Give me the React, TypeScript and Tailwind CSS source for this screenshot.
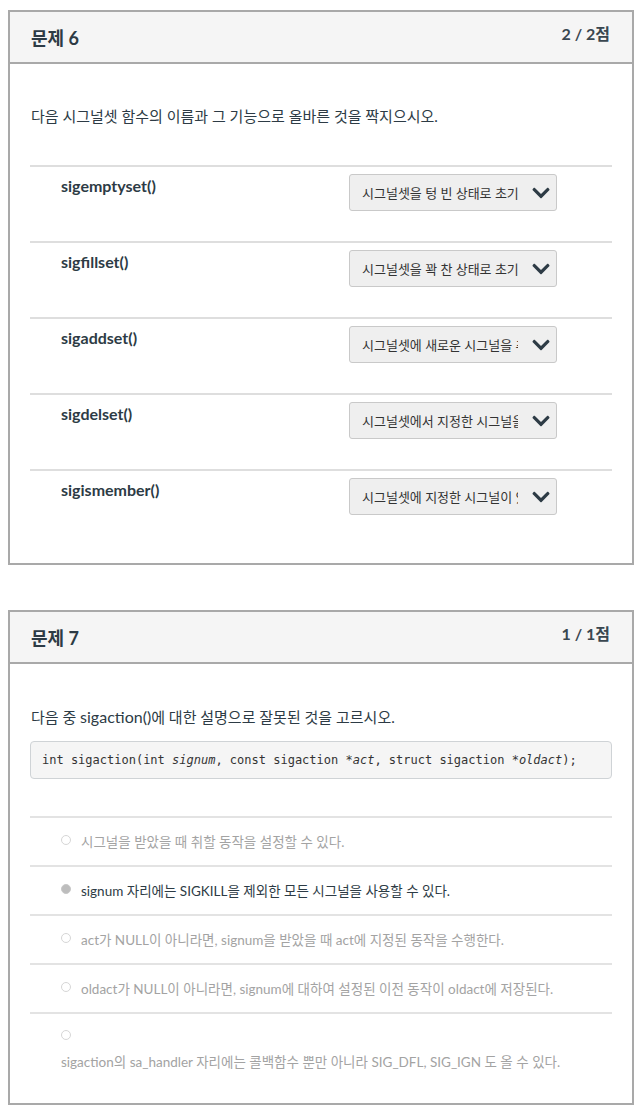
import { FaChevronDown } from "react-icons/fa"

const matches = [
  { name: "sigemptyset()", answer: "시그널셋을 텅 빈 상태로 초기화한다." },
  { name: "sigfillset()", answer: "시그널셋을 꽉 찬 상태로 초기화한다." },
  { name: "sigaddset()", answer: "시그널셋에 새로운 시그널을 추가한다." },
  { name: "sigdelset()", answer: "시그널셋에서 지정한 시그널을 삭제한다." },
  { name: "sigismember()", answer: "시그널셋에 지정한 시그널이 있는지 확인한다." },
]

const options = [
  { text: "시그널을 받았을 때 취할 동작을 설정할 수 있다.", selected: false },
  { text: "signum 자리에는 SIGKILL을 제외한 모든 시그널을 사용할 수 있다.", selected: true },
  { text: "act가 NULL이 아니라면, signum을 받았을 때 act에 지정된 동작을 수행한다.", selected: false },
  { text: "oldact가 NULL이 아니라면, signum에 대하여 설정된 이전 동작이 oldact에 저장된다.", selected: false },
]

function Header({ title, score }: { title: string; score: string }) {
  return (
    <div className="flex h-[52px] items-start justify-between border-b-2 border-[#a9a9a9] bg-[#f5f5f5] pl-[21px] pr-[22px]">
      <h2 className="mt-[13px] text-[18px] font-bold leading-[26px] text-[#2d3b45]">{title}</h2>
      <span className="mt-[10px] text-[16px] font-bold leading-[24px] text-[#3a4750]">{score}</span>
    </div>
  )
}

function Radio({ selected }: { selected: boolean }) {
  return selected ? (
    <span className="block h-[10px] w-[10px] shrink-0 rounded-full border border-[#c8c8c8] bg-[#bdbdbd]" />
  ) : (
    <span className="block h-[10px] w-[10px] shrink-0 rounded-full border border-[#d6d6d6] bg-white" />
  )
}

export default function App() {
  return (
    <div className="min-h-[1120px] bg-white px-[8px] pt-[10px] font-['Lato','Noto_Sans_CJK_KR',sans-serif] text-[#2d3b45]">
      {/* 문제 6 */}
      <section className="border-2 border-[#a9a9a9]">
        <Header title="문제 6" score="2 / 2점" />
        <div className="px-[20px] pb-[18px] pt-[40px]">
          <p className="pl-[1px] text-[15px] leading-[24px]">다음 시그널셋 함수의 이름과 그 기능으로 올바른 것을 짝지으시오.</p>
          <div className="mt-[37px]">
            {matches.map((m) => (
              <div key={m.name} className="flex border-t-2 border-[#dedede] pb-[30px] pt-[7px]">
                <div className="w-[319px] pl-[31px] text-[16px] font-bold leading-[24px]">{m.name}</div>
                <div className="flex h-[37px] w-[208px] items-center rounded-[3px] border border-[#c9c9c9] bg-[#efefef] pl-[12px] pr-[5px]">
                  <span className="w-[156px] overflow-hidden whitespace-nowrap pt-[2px] text-[13px] text-[#333]">{m.answer}</span>
                  <FaChevronDown size={20} className="ml-auto text-[#2d3b45]" />
                </div>
              </div>
            ))}
          </div>
        </div>
      </section>

      {/* 문제 7 */}
      <section className="mt-[45px] border-2 border-[#a9a9a9]">
        <Header title="문제 7" score="1 / 1점" />
        <div className="px-[20px] pb-[18px] pt-[41px]">
          <p className="pl-[1px] text-[15px] leading-[24px]">
            다음 중 <span className="text-[16px]">sigaction()</span>에 대한 설명으로 잘못된 것을 고르시오.
          </p>
          <div className="mt-[12px] flex h-[38px] items-center rounded-[4px] border border-[#cfd3d6] bg-[#f5f5f5] px-[11px] font-['DejaVu_Sans_Mono',monospace] text-[12px] text-[#333]">
            <span>
              int sigaction(int <i>signum</i>, const sigaction *<i>act</i>, struct sigaction *<i>oldact</i>);
            </span>
          </div>
          <div className="mt-[37px]">
            {options.map((o) => (
              <div key={o.text} className="flex items-start gap-[10px] border-t-2 border-[#e3e3e3] pb-[13px] pl-[31px] pt-[14px]">
                <span className="mt-[3px]">
                  <Radio selected={o.selected} />
                </span>
                <span className={"text-[13.5px] leading-[20px] " + (o.selected ? "text-[#2d3b45]" : "text-[#a3a3a3]")}>{o.text}</span>
              </div>
            ))}
            <div className="border-t-2 border-[#e3e3e3] pb-[13px] pl-[31px] pt-[16px]">
              <Radio selected={false} />
              <p className="mt-[12px] text-[13.5px] leading-[20px] text-[#a3a3a3]">
                sigaction의 sa_handler 자리에는 콜백함수 뿐만 아니라 SIG_DFL, SIG_IGN 도 올 수 있다.
              </p>
            </div>
          </div>
        </div>
      </section>
    </div>
  )
}
